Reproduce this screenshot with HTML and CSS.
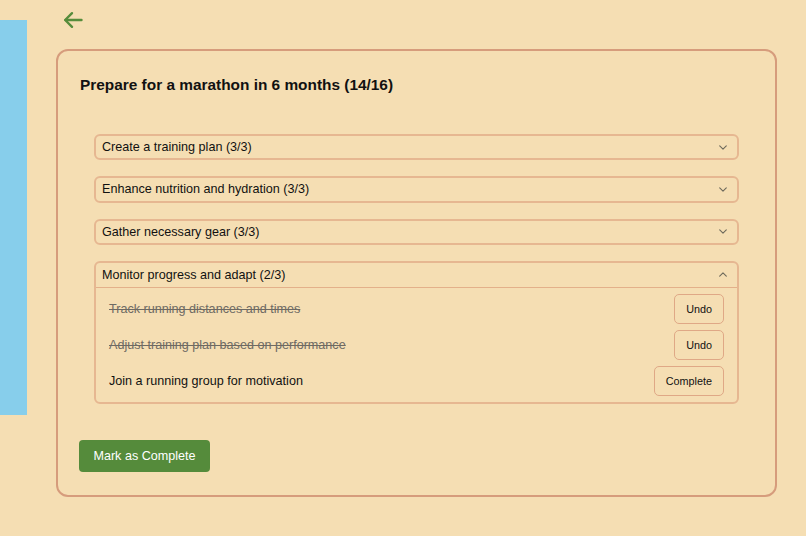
FILE: index.html
```html
<!DOCTYPE html>
<html lang="en">
<head>
<meta charset="utf-8">
<title>Goal</title>
<link rel="stylesheet" href="styles.css">
</head>
<body>
<div class="app">
  <aside class="sidebar"></aside>
  <main class="main">
    <button class="back" aria-label="Back">
      <svg width="20" height="18" viewBox="0 0 20 18" fill="none" stroke="#568c3b" stroke-width="2.4" stroke-linecap="round" stroke-linejoin="round">
        <path d="M18.5 9H2.5"/>
        <path d="M9 2.2L2.2 9 9 15.8"/>
      </svg>
    </button>
    <section class="card">
      <h1 class="title">Prepare for a marathon in 6 months (14/16)</h1>
      <div class="list">
        <div class="acc">
          <div class="acc-head"><span>Create a training plan (3/3)</span><svg class="chev" width="8" height="5" viewBox="0 0 8 5" fill="none" stroke="#6e6a5c" stroke-width="1.1" stroke-linecap="round" stroke-linejoin="round"><path d="M0.7 0.8L4 4.2 7.3 0.8"/></svg></div>
        </div>
        <div class="acc">
          <div class="acc-head"><span>Enhance nutrition and hydration (3/3)</span><svg class="chev" width="8" height="5" viewBox="0 0 8 5" fill="none" stroke="#6e6a5c" stroke-width="1.1" stroke-linecap="round" stroke-linejoin="round"><path d="M0.7 0.8L4 4.2 7.3 0.8"/></svg></div>
        </div>
        <div class="acc">
          <div class="acc-head"><span>Gather necessary gear (3/3)</span><svg class="chev" width="8" height="5" viewBox="0 0 8 5" fill="none" stroke="#6e6a5c" stroke-width="1.1" stroke-linecap="round" stroke-linejoin="round"><path d="M0.7 0.8L4 4.2 7.3 0.8"/></svg></div>
        </div>
        <div class="acc open">
          <div class="acc-head"><span>Monitor progress and adapt (2/3)</span><svg class="chev" width="8" height="5" viewBox="0 0 8 5" fill="none" stroke="#6e6a5c" stroke-width="1.1" stroke-linecap="round" stroke-linejoin="round"><path d="M0.7 4.2L4 0.8 7.3 4.2"/></svg></div>
          <div class="acc-body">
            <div class="task done"><span class="task-text">Track running distances and times</span><button class="btn">Undo</button></div>
            <div class="task done"><span class="task-text">Adjust training plan based on performance</span><button class="btn">Undo</button></div>
            <div class="task"><span class="task-text">Join a running group for motivation</span><button class="btn">Complete</button></div>
          </div>
        </div>
      </div>
      <button class="primary">Mark as Complete</button>
    </section>
  </main>
</div>
</body>
</html>
```

FILE: styles.css
```css
* { box-sizing: border-box; }
html, body {
  margin: 0;
  padding: 0;
  background: #f5deb3;
  font-family: "Liberation Sans", Arial, sans-serif;
  color: #111;
}
.app {
  display: flex;
  align-items: flex-start;
  min-height: 536px;
}
.sidebar {
  width: 27px;
  height: 395px;
  margin-top: 20px;
  background: #87ceeb;
  flex: none;
}
.main {
  flex: 1;
  padding: 10px 29px 0 29px;
}
.back {
  display: block;
  background: none;
  border: 0;
  padding: 0;
  margin: 0 0 0 7px;
  height: 20px;
  cursor: pointer;
}
.back svg { display: block; }
.card {
  margin-top: 19px;
  width: 721px;
  border: 2px solid #d69c7c;
  border-radius: 12px;
  padding: 22px 22px 23px 21px;
}
.title {
  margin: 2px 0 0 1px;
  font-size: 15.4px;
  line-height: 20px;
  font-weight: bold;
}
.list {
  margin: 39px 14px 0 15px;
  display: flex;
  flex-direction: column;
  gap: 16px;
}
.acc {
  border: 2px solid #e6b791;
  border-radius: 6px;
}
.acc-head {
  height: 22.3px;
  display: flex;
  align-items: center;
  justify-content: space-between;
  padding: 0 10px 0 6px;
  font-size: 12.6px;
}
.open .acc-head {
  height: 25px;
  border-bottom: 1px solid #e3b08a;
}
.chev { display: block; }
.acc-body {
  padding: 6px 13px 6px 13px;
  display: flex;
  flex-direction: column;
  gap: 6px;
}
.task {
  height: 30px;
  display: flex;
  align-items: center;
  justify-content: space-between;
  font-size: 12.6px;
}
.task.done .task-text {
  text-decoration: line-through;
  color: #6e6a63;
}
.btn {
  height: 30px;
  padding: 0 11px;
  font-family: inherit;
  font-size: 10.8px;
  color: #111;
  background: #f5deb3;
  border: 1px solid #dfa886;
  border-radius: 5px;
}
.primary {
  margin-top: 36px;
  display: block;
  height: 32px;
  width: 131px;
  background: #558b3b;
  color: #fff;
  border: 0;
  border-radius: 4px;
  font-family: inherit;
  font-size: 12.6px;
}
```
